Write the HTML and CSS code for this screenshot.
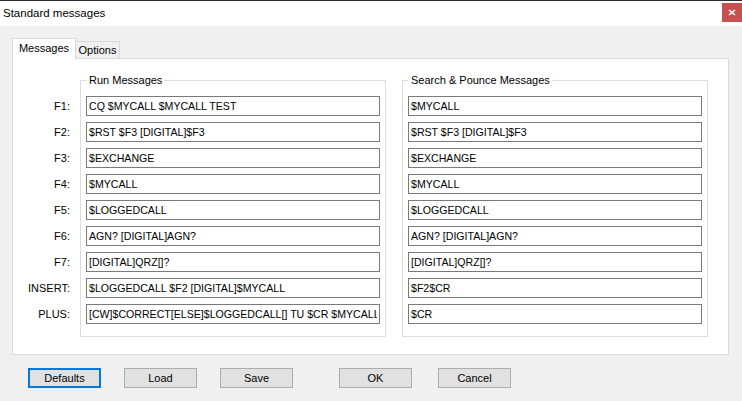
FILE: index.html
```html
<!DOCTYPE html>
<html lang="en">
<head>
    <meta charset="UTF-8">
    <title>Standard messages</title>
    <link rel="stylesheet" href="styles.css">
</head>
<body>
<div class="window">
    <div class="titlebar">
        <span class="title">Standard messages</span>
        <div class="close">
            <svg width="8" height="7" viewBox="0 0 8 7"><path d="M1 1 L7 6 M7 1 L1 6" stroke="#fff" stroke-width="1.6"/></svg>
        </div>
    </div>

    <div class="client">
        <div class="tabs">
            <div class="tab active">Messages</div>
            <div class="tab">Options</div>
        </div>

        <div class="tab-panel">
            <div class="labels">
                <div class="lbl">F1:</div>
                <div class="lbl">F2:</div>
                <div class="lbl">F3:</div>
                <div class="lbl">F4:</div>
                <div class="lbl">F5:</div>
                <div class="lbl">F6:</div>
                <div class="lbl">F7:</div>
                <div class="lbl">INSERT:</div>
                <div class="lbl">PLUS:</div>
            </div>

            <div class="group">
                <div class="legend">Run Messages</div>
                <input type="text" value="CQ $MYCALL $MYCALL TEST">
                <input type="text" value="$RST $F3 [DIGITAL]$F3">
                <input type="text" value="$EXCHANGE">
                <input type="text" value="$MYCALL">
                <input type="text" value="$LOGGEDCALL">
                <input type="text" value="AGN? [DIGITAL]AGN?">
                <input type="text" value="[DIGITAL]QRZ[]?">
                <input type="text" value="$LOGGEDCALL $F2 [DIGITAL]$MYCALL">
                <input type="text" value="[CW]$CORRECT[ELSE]$LOGGEDCALL[] TU $CR $MYCALL">
            </div>

            <div class="group second">
                <div class="legend">Search &amp; Pounce Messages</div>
                <input type="text" value="$MYCALL">
                <input type="text" value="$RST $F3 [DIGITAL]$F3">
                <input type="text" value="$EXCHANGE">
                <input type="text" value="$MYCALL">
                <input type="text" value="$LOGGEDCALL">
                <input type="text" value="AGN? [DIGITAL]AGN?">
                <input type="text" value="[DIGITAL]QRZ[]?">
                <input type="text" value="$F2$CR">
                <input type="text" value="$CR">
            </div>
        </div>

        <div class="buttons">
            <button class="btn default">Defaults</button>
            <button class="btn">Load</button>
            <button class="btn">Save</button>
            <button class="btn btn-ok">OK</button>
            <button class="btn btn-cancel">Cancel</button>
        </div>
    </div>
</div>
</body>
</html>
```

FILE: styles.css
```css
* {
    margin: 0;
    padding: 0;
    box-sizing: border-box;
}
body {
    font-family: 'Liberation Sans', Arial, sans-serif;
    font-size: 11px;
    color: #000;
    background: #f0f0f0;
}
.window {
    width: 742px;
    height: 401px;
    background: #f0f0f0;
    overflow: hidden;
}
.titlebar {
    height: 26px;
    background: #ffffff;
    border-top: 1px solid #2b2b2b;
    display: flex;
    align-items: center;
    justify-content: space-between;
    padding-left: 3px;
}
.title {
    font-size: 11.5px;
    margin-top: -1px;
}
.close {
    width: 20px;
    height: 19px;
    margin-top: -2px;
    background: #c75050;
    display: flex;
    align-items: center;
    justify-content: center;
}
.client {
    padding: 12px 13px 0 12px;
}
.tabs {
    display: flex;
    align-items: flex-end;
    height: 20px;
}
.tab {
    height: 17px;
    width: 44px;
    border: 1px solid #d9d9d9;
    border-bottom: none;
    border-left: none;
    text-align: center;
    line-height: 17px;
}
.tab.active {
    width: 64px;
    height: 21px;
    margin-bottom: -1px;
    border-left: 1px solid #d9d9d9;
    background: #ffffff;
    position: relative;
    z-index: 1;
    line-height: 19px;
}
.tab-panel {
    width: 717px;
    height: 297px;
    background: #ffffff;
    border: 1px solid #d9d9d9;
    display: flex;
    align-items: flex-start;
}
.labels {
    width: 57px;
    padding-top: 37px;
    text-align: right;
}
.lbl {
    height: 20px;
    line-height: 20px;
    margin-bottom: 6px;
}
.group {
    width: 306px;
    margin-top: 21px;
    margin-left: 10px;
    border: 1px solid #dcdcdc;
    padding: 0 5px 12px 5px;
    display: flex;
    flex-direction: column;
    gap: 6px;
}
.group.second {
    margin-left: 16px;
}
.legend {
    align-self: flex-start;
    margin-top: -8px;
    margin-bottom: 3px;
    padding: 0 2px 0 3px;
    line-height: 14px;
    background: #ffffff;
}
.group input {
    height: 20px;
    width: 100%;
    border: 1px solid #7a7a7a;
    padding: 0 2px;
    font-family: 'Liberation Sans', Arial, sans-serif;
    font-size: 10.6px;
    color: #000;
    background: #fff;
    outline: none;
}
.buttons {
    display: flex;
    gap: 23px;
    padding-left: 16px;
    margin-top: 13px;
}
.btn {
    width: 73px;
    height: 20px;
    background: #e1e1e1;
    border: 1px solid #adadad;
    font-family: 'Liberation Sans', Arial, sans-serif;
    font-size: 11px;
    color: #000;
}
.btn.default {
    border: 2px solid #0078d7;
}
.btn-ok {
    margin-left: 23px;
}
.btn-cancel {
    margin-left: 3px;
}
```
